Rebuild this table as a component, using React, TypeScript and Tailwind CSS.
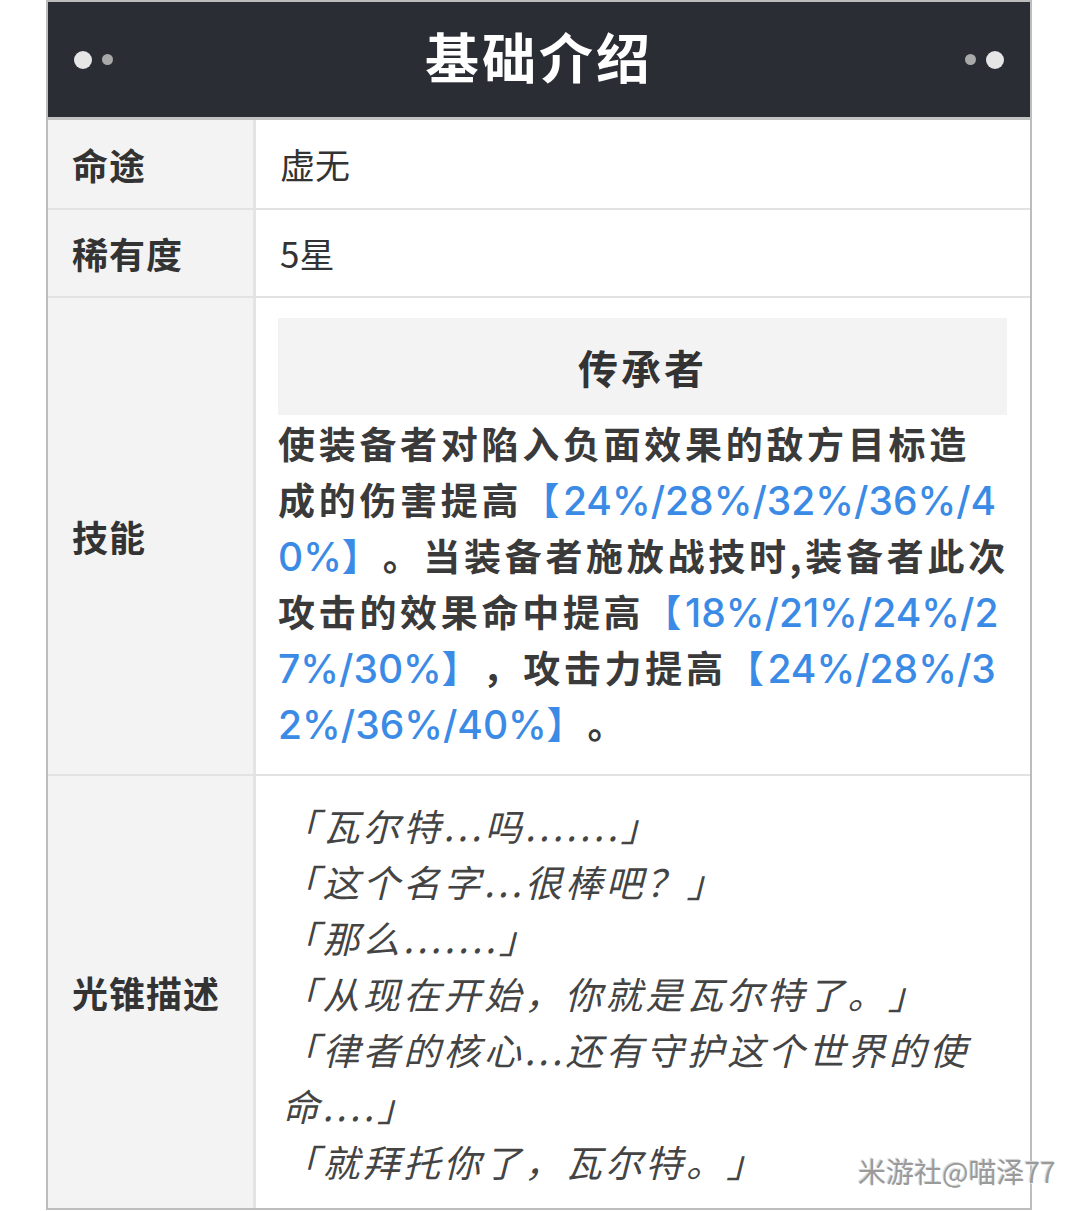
import type { ReactNode } from "react";

const font = { fontFamily: '"Noto Sans CJK SC", "Noto Sans", sans-serif' };

function Row({ label, children, last }: { label: string; children: ReactNode; last?: boolean }) {
  return (
    <div className={`grid grid-cols-[205px_3px_minmax(0,1fr)] ${last ? "" : "border-b-2 border-[#e2e2e2]"}`}>
      <div className="flex items-center bg-[#f3f3f3] pl-[24px] text-[36px] font-bold tracking-[1px] text-[#333]">
        {label}
      </div>
      <div className="bg-[#e4e4e4]" />
      {children}
    </div>
  );
}

const Blue = ({ children }: { children: ReactNode }) => <span className="text-[#3b8be6]">{children}</span>;

// numbers in the skill text use a latin face, like the phone's system font
const Num = ({ children }: { children: ReactNode }) => (
  <span
    className="text-[39px] font-medium leading-none tracking-normal"
    style={{ fontFamily: 'Inter, "Noto Sans CJK SC", sans-serif' }}
  >
    {children}
  </span>
);

const quotes = [
  "「瓦尔特...吗.......」",
  "「这个名字...很棒吧？」",
  "「那么.......」",
  "「从现在开始，你就是瓦尔特了。」",
  "「律者的核心...还有守护这个世界的使命....」",
  "「就拜托你了，瓦尔特。」",
];

export default function App() {
  return (
    <div className="relative h-[1211px] overflow-hidden bg-white [text-spacing-trim:space-all]" style={font}>
      <div className="ml-[46px] w-[986px] border-x-2 border-y-2 border-[#bdbdbd]">
        <header className="flex h-[118px] items-center justify-between border-b-[3px] border-[#c2c2c2] bg-[#2a2d34] px-[26px]">
          <div className="flex items-center gap-[10px]">
            <span className="h-[18px] w-[18px] rounded-full bg-[#e6e6e6]" />
            <span className="h-[11px] w-[11px] rounded-full bg-[#a9a9a9]" />
          </div>
          <h1 className="mb-[8px] text-[54px] font-bold tracking-[3px] text-white">基础介绍</h1>
          <div className="flex items-center gap-[10px]">
            <span className="h-[11px] w-[11px] rounded-full bg-[#a9a9a9]" />
            <span className="h-[18px] w-[18px] rounded-full bg-[#e6e6e6]" />
          </div>
        </header>

        <Row label="命途">
          <div className="flex h-[88px] items-center pl-[24px] text-[35px] text-[#333]">虚无</div>
        </Row>
        <Row label="稀有度">
          <div className="flex h-[86px] items-center pl-[24px] text-[35px] text-[#333]">5星</div>
        </Row>
        <Row label="技能">
          <div className="pb-[23px] pl-[22px] pr-[23px] pt-[20px]">
            <div className="flex h-[97px] items-center justify-center bg-[#f3f3f3] text-[40px] font-bold tracking-[3px] text-[#333]">
              传承者
            </div>
            <p className="whitespace-nowrap text-[37px] font-bold leading-[56px] tracking-[3.7px] text-[#3a3a3a]">
              使装备者对陷入负面效果的敌方目标造
              <br />
              成的伤害提高<Blue>【<Num>24%/28%/32%/36%/4</Num></Blue>
              <br />
              <Blue><Num>0%</Num>】</Blue>。当装备者施放战技时,装备者此次
              <br />
              攻击的效果命中提高<Blue>【<Num>18%/21%/24%/2</Num></Blue>
              <br />
              <Blue><Num>7%/30%</Num>】</Blue>，攻击力提高<Blue>【<Num>24%/28%/3</Num></Blue>
              <br />
              <Blue><Num>2%/36%/40%</Num>】</Blue>。
            </p>
          </div>
        </Row>
        <Row label="光锥描述" last>
          <div className="pb-[19px] pl-[26px] pr-[23px] pt-[21px]">
            {quotes.map((q) => (
              <p key={q} className="text-[37px] italic leading-[56px] tracking-[3.4px] text-[#444]">
                {q}
              </p>
            ))}
          </div>
        </Row>
      </div>
      <div className="absolute left-[858px] top-[1150px] text-[28px] text-[#9a9a9a] [text-shadow:1px_1px_1px_#ffffff,-1px_-1px_1px_#d0d0d0]">
        米游社@喵泽77
      </div>
    </div>
  );
}
